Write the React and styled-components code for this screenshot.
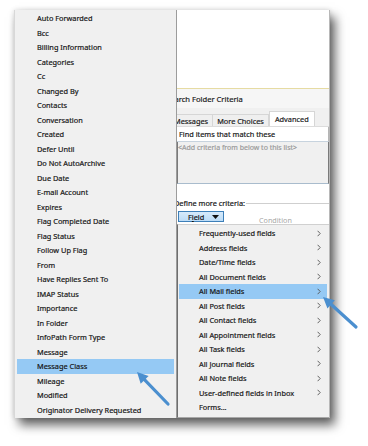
import React from "react";
import styled, { createGlobalStyle } from "styled-components";

const GlobalStyle = createGlobalStyle`
  html, body { margin: 0; padding: 0; background: #ffffff; }
  body { font-family: "Noto Sans", "Open Sans", sans-serif; -webkit-text-stroke: 0.18px; }
  * { box-sizing: border-box; }
`;

const Stage = styled.div`
  position: relative;
  width: 368px;
  height: 446px;
  padding: 10px 0 0 14px;
  overflow: hidden;
  background: #fff;
`;

const Composite = styled.div`
  display: flex;
  width: 316px;
  height: 408px;
  background: #f0f0f0;
  box-shadow: 5px 7px 10px rgba(0, 0, 0, 0.62), 0 0 5px rgba(0, 0, 0, 0.14);
`;

const FieldMenu = styled.ul`
  list-style: none;
  margin: 0;
  padding: 1px 2px 0 2px;
  width: 163px;
  flex: none;
  background: #f0f0f0;
  border-left: 1px solid #d8d8d8;
  border-right: 1px solid #9c9c9c;
`;

const MenuItem = styled.li`
  height: 14.5px;
  line-height: 14.5px;
  padding-left: ${(p) => p.$indent || 20}px;
  padding-right: 6px;
  font-size: 7.35px;
  color: #141414;
  white-space: nowrap;
  display: flex;
  align-items: center;
  justify-content: space-between;
  background: ${(p) => (p.$active ? "#95c9f4" : "transparent")};
`;

const DialogColumn = styled.div`
  flex: 1;
  min-width: 0;
  display: flex;
  flex-direction: column;
  overflow: hidden;
  background: #fff;
  border-right: 1px solid #b8b8b8;
`;

const TopBlank = styled.div`
  height: 79px;
  background: #ffffff;
  border-bottom: 1px solid #e6dba2;
  flex: none;
`;

const TitleBand = styled.div`
  height: 19px;
  flex: none;
  background: #f6f6f6;
  font-size: 7.6px;
  color: #1a1a1a;
  display: flex;
  align-items: center;
  white-space: nowrap;
  overflow: hidden;
`;

const ClipText = styled.span`
  margin-left: ${(p) => p.$shift}px;
`;

const TabStrip = styled.div`
  height: 19px;
  flex: none;
  background: #f0f0f0;
  display: flex;
  align-items: flex-end;
  overflow: hidden;
  border-bottom: 1px solid #dcdcdc;
`;

const Tab = styled.div`
  height: ${(p) => (p.$selected ? 15 : 12)}px;
  padding: 0 ${(p) => (p.$selected ? 5 : 4)}px;
  margin-left: ${(p) => p.$shift || 0}px;
  font-size: 7.35px;
  color: #1a1a1a;
  display: flex;
  align-items: center;
  white-space: nowrap;
  background: ${(p) => (p.$selected ? "#ffffff" : "#efefef")};
  border: 1px solid #d6d6d6;
  border-bottom: none;
  border-left: ${(p) => (p.$selected ? "1px solid #d6d6d6" : "none")};
`;

const FindBar = styled.div`
  height: 15px;
  flex: none;
  background: #fff;
  font-size: 7.35px;
  color: #141414;
  display: flex;
  align-items: center;
  padding-left: 2px;
  border-right: 1px solid #b5b5b5;
  border-bottom: 1px solid #c7d3de;
`;

const CriteriaList = styled.div`
  height: 42px;
  flex: none;
  background: #f0f0f0;
  border-left: 1px solid #7a7a7a;
  border-right: 1px solid #7a7a7a;
  border-bottom: 1px solid #a9bccd;
  font-size: 7px;
  color: #9a9a9a;
  padding: 1px 0 0 0;
  white-space: nowrap;
`;

const DefineArea = styled.div`
  height: 40px;
  flex: none;
  background: #fff;
  display: flex;
  flex-direction: column;
  padding-top: 14px;
`;

const GroupLabelRow = styled.div`
  display: flex;
  align-items: center;
  font-size: 7.35px;
  color: #141414;
  white-space: nowrap;
  height: 10px;
`;

const GroupLine = styled.span`
  flex: 1;
  height: 1px;
  background: #cfcfcf;
  margin-left: 1px;
`;

const ControlRow = styled.div`
  display: flex;
  align-items: flex-end;
  margin-top: 3px;
  padding-left: 1px;
`;

const FieldButton = styled.div`
  width: 46px;
  height: 11px;
  border: 1px solid #3d7fb8;
  background: linear-gradient(#d7eafb, #bcdcf6);
  font-size: 7.35px;
  color: #111;
  display: flex;
  align-items: center;
  justify-content: space-between;
  padding: 0 4px 0 9px;
  u { text-decoration: underline; }
`;

const ConditionLabel = styled.span`
  font-size: 7.2px;
  color: #a6a6a6;
  margin-left: 35px;
  margin-bottom: -3px;
  white-space: nowrap;
  -webkit-text-stroke: 0;
`;

const SubMenu = styled.ul`
  list-style: none;
  margin: 0;
  flex: 1;
  padding: 1px 2px 0 1px;
  background: #f0f0f0;
  border-left: 1px solid #6e6e6e;
  border-top: 1px solid #d0d0d0;
  border-bottom: 1px solid #a8a8a8;
`;

const Overlay = styled.svg`
  position: absolute;
  left: 0;
  top: 0;
  pointer-events: none;
`;

const Chevron = () => (
  <svg width="4" height="7" viewBox="0 0 4 7">
    <path d="M0.6 0.8 L3.2 3.5 L0.6 6.2" fill="none" stroke="#555" strokeWidth="0.9" />
  </svg>
);

const DropArrow = () => (
  <svg width="7" height="4" viewBox="0 0 7 4">
    <path d="M0 0 H7 L3.5 4 Z" fill="#111" />
  </svg>
);

function Arrow({ tip, tail, color = "#4b8fcf" }) {
  const dx = tip[0] - tail[0];
  const dy = tip[1] - tail[1];
  const len = Math.hypot(dx, dy);
  const ux = dx / len;
  const uy = dy / len;
  const head = 11;
  const half = 5.5;
  const bx = tip[0] - ux * head;
  const by = tip[1] - uy * head;
  const px = -uy;
  const py = ux;
  const pts = [
    [tip[0], tip[1]],
    [bx + px * half, by + py * half],
    [bx - px * half, by - py * half],
  ]
    .map((p) => p.join(","))
    .join(" ");
  return (
    <g>
      <line x1={tail[0]} y1={tail[1]} x2={bx + ux} y2={by + uy} stroke={color} strokeWidth="3.2" strokeLinecap="round" />
      <polygon points={pts} fill={color} />
    </g>
  );
}

const fields = [
  "Auto Forwarded",
  "Bcc",
  "Billing Information",
  "Categories",
  "Cc",
  "Changed By",
  "Contacts",
  "Conversation",
  "Created",
  "Defer Until",
  "Do Not AutoArchive",
  "Due Date",
  "E-mail Account",
  "Expires",
  "Flag Completed Date",
  "Flag Status",
  "Follow Up Flag",
  "From",
  "Have Replies Sent To",
  "IMAP Status",
  "Importance",
  "In Folder",
  "InfoPath Form Type",
  "Message",
  "Message Class",
  "Mileage",
  "Modified",
  "Originator Delivery Requested",
];

const groups = [
  "Frequently-used fields",
  "Address fields",
  "Date/Time fields",
  "All Document fields",
  "All Mail fields",
  "All Post fields",
  "All Contact fields",
  "All Appointment fields",
  "All Task fields",
  "All Journal fields",
  "All Note fields",
  "User-defined fields in Inbox",
  "Forms...",
];

export default function App() {
  return (
    <>
      <GlobalStyle />
      <Stage>
        <Composite>
          <FieldMenu>
            {fields.map((f) => (
              <MenuItem key={f} $active={f === "Message Class"}>
                {f}
              </MenuItem>
            ))}
          </FieldMenu>
          <DialogColumn>
            <TopBlank />
            <TitleBand>
              <ClipText $shift={-11}>Search Folder Criteria</ClipText>
            </TitleBand>
            <TabStrip>
              <Tab $shift={-7}>Messages</Tab>
              <Tab>More Choices</Tab>
              <Tab $selected>Advanced</Tab>
            </TabStrip>
            <FindBar>Find items that match these</FindBar>
            <CriteriaList>&lt;Add criteria from below to this list&gt;</CriteriaList>
            <DefineArea>
              <GroupLabelRow>
                <ClipText $shift={-3}>Define more criteria:</ClipText>
                <GroupLine />
              </GroupLabelRow>
              <ControlRow>
                <FieldButton>
                  <span>
                    F<u>i</u>eld
                  </span>
                  <DropArrow />
                </FieldButton>
                <ConditionLabel>Condition</ConditionLabel>
              </ControlRow>
            </DefineArea>
            <SubMenu>
              {groups.map((g) => (
                <MenuItem key={g} $indent={20} $active={g === "All Mail fields"}>
                  <span>{g}</span>
                  {g !== "Forms..." && <Chevron />}
                </MenuItem>
              ))}
            </SubMenu>
          </DialogColumn>
        </Composite>
        <Overlay width="368" height="446" viewBox="0 0 368 446">
          <Arrow tip={[137, 372]} tail={[168, 404]} />
          <Arrow tip={[323, 297]} tail={[356, 327]} />
        </Overlay>
      </Stage>
    </>
  );
}
